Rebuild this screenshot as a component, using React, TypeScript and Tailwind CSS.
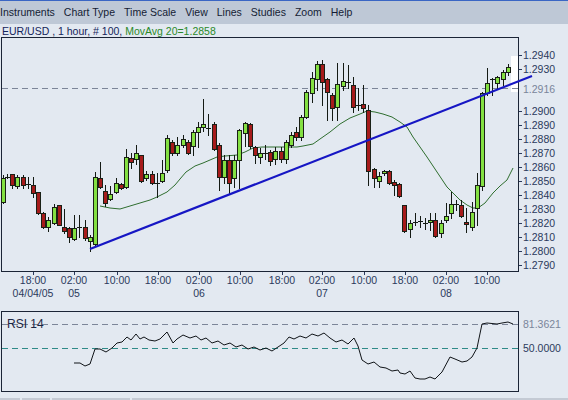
import React from 'react';

type Candle = [kind: 'g' | 'r' | 'd', top: number, bottom: number, high: number, low: number];

// pixel rows read off the plot (page coordinates), one entry per hourly bar
const CANDLES: Candle[] = [
  ['g', 178, 202, 175, 203], ['d', 177, 177, 174, 178], ['r', 174, 185, 174, 188], ['g', 177, 186, 175, 188],
  ['r', 177, 185, 175, 188], ['d', 184, 184, 177, 188], ['r', 185, 193, 177, 197], ['r', 192, 213, 192, 214],
  ['r', 213, 227, 212, 228], ['g', 220, 227, 217, 231], ['g', 207, 223, 204, 224], ['r', 205, 225, 205, 225],
  ['r', 227, 231, 209, 233], ['r', 228, 237, 227, 242], ['g', 228, 239, 215, 240], ['d', 227, 227, 215, 237],
  ['r', 227, 238, 220, 240], ['g', 237, 241, 235, 251], ['g', 177, 244, 172, 245], ['r', 178, 187, 162, 188],
  ['r', 191, 203, 185, 206], ['g', 194, 199, 186, 200], ['g', 183, 192, 178, 193], ['r', 184, 188, 183, 189],
  ['g', 157, 187, 149, 188], ['r', 158, 162, 153, 168], ['g', 153, 159, 145, 164], ['r', 155, 181, 155, 182],
  ['g', 174, 178, 171, 180], ['r', 174, 183, 171, 184], ['d', 183, 183, 173, 197], ['g', 173, 181, 160, 182],
  ['g', 138, 170, 135, 172], ['r', 142, 153, 140, 155], ['g', 145, 153, 137, 155], ['g', 139, 145, 135, 147],
  ['r', 142, 153, 140, 154], ['g', 132, 146, 130, 155], ['g', 127, 132, 122, 147], ['g', 124, 127, 99, 131],
  ['d', 128, 128, 114, 135], ['r', 124, 149, 122, 150], ['r', 145, 177, 143, 190], ['g', 160, 177, 155, 183],
  ['r', 160, 183, 155, 193], ['g', 160, 178, 155, 187], ['g', 130, 160, 129, 188], ['g', 123, 133, 122, 146],
  ['r', 124, 146, 123, 148], ['r', 147, 155, 146, 163], ['g', 153, 157, 148, 163], ['d', 153, 153, 145, 159],
  ['r', 152, 161, 150, 165], ['g', 151, 159, 147, 164], ['r', 151, 159, 147, 162], ['g', 142, 159, 140, 163],
  ['g', 135, 145, 132, 147], ['r', 132, 137, 127, 140], ['g', 117, 137, 115, 140], ['g', 92, 117, 90, 118],
  ['g', 78, 93, 72, 102], ['g', 64, 79, 61, 90], ['r', 64, 82, 60, 105], ['r', 79, 92, 78, 120],
  ['r', 95, 108, 93, 120], ['g', 84, 107, 63, 120], ['g', 81, 86, 63, 90], ['d', 82, 82, 65, 88],
  ['r', 85, 107, 77, 112], ['d', 105, 105, 88, 110], ['r', 104, 108, 85, 112], ['r', 110, 171, 105, 185],
  ['r', 169, 178, 168, 187], ['g', 176, 181, 172, 187], ['g', 171, 173, 170, 175], ['r', 171, 183, 170, 184],
  ['r', 182, 185, 180, 195], ['r', 184, 196, 183, 197], ['r', 205, 231, 205, 232], ['g', 223, 229, 220, 237],
  ['d', 222, 222, 213, 225], ['d', 221, 221, 216, 227], ['d', 223, 223, 218, 229], ['g', 220, 222, 213, 230],
  ['r', 220, 236, 213, 237], ['g', 223, 233, 220, 237], ['g', 216, 220, 203, 222], ['g', 204, 213, 192, 218],
  ['d', 204, 204, 200, 210], ['r', 205, 216, 200, 217], ['r', 222, 224, 208, 232], ['g', 212, 227, 202, 230],
  ['g', 185, 208, 173, 225], ['g', 93, 186, 92, 190], ['g', 83, 93, 68, 95], ['d', 79, 79, 78, 95],
  ['g', 77, 83, 76, 88], ['g', 72, 79, 70, 85], ['g', 67, 72, 64, 75],
];

const MA: [number, number][] = [
  [100, 206], [110, 208], [120, 209], [130, 206], [140, 203], [150, 200], [157, 197], [167, 192], [175, 185],
  [180, 179], [186, 172], [195, 166], [203, 163], [210, 160], [217, 157], [225, 156], [237, 155], [245, 152],
  [253, 148], [262, 147], [270, 147], [287, 147], [297, 147], [303, 146], [313, 144], [320, 139], [330, 132],
  [340, 124], [350, 118], [360, 114], [367, 111], [375, 112], [383, 114], [392, 117], [400, 122], [407, 127],
  [413, 137], [420, 147], [427, 157], [437, 172], [447, 187], [455, 195], [460, 200], [467, 205], [473, 208],
  [478, 208], [485, 203], [493, 193], [500, 186], [507, 180], [513, 168],
];

const RSI: [number, number][] = [
  [74, 363], [80, 363], [85, 366], [90, 364], [95, 349], [100, 349], [106, 352], [112, 348], [117, 343],
  [122, 342], [127, 337], [131, 340], [136, 334], [140, 339], [144, 337], [149, 340], [155, 341], [160, 339],
  [167, 332], [173, 343], [177, 339], [183, 335], [190, 338], [196, 336], [201, 340], [206, 338], [212, 343],
  [218, 341], [224, 345], [230, 343], [236, 347], [242, 345], [248, 349], [254, 347], [260, 350], [266, 348],
  [272, 351], [278, 347], [284, 343], [289, 337], [294, 339], [300, 336], [306, 338], [312, 334], [318, 336],
  [324, 333], [330, 338], [336, 342], [342, 340], [348, 344], [354, 338], [358, 346], [362, 360], [368, 364],
  [374, 362], [380, 367], [386, 368], [392, 371], [398, 370], [400, 373], [405, 374], [410, 371], [415, 378],
  [420, 379], [425, 379], [430, 377], [435, 379], [442, 372], [450, 357], [455, 359], [462, 362], [467, 361],
  [472, 357], [477, 348], [482, 324], [487, 323], [497, 324], [502, 323], [508, 322], [513, 324],
];

const PRICES = ['1.2940', '1.2930', '1.2900', '1.2890', '1.2880', '1.2870', '1.2860', '1.2850', '1.2840', '1.2830', '1.2820', '1.2810', '1.2800', '1.2790'];

const TIMES = [
  { x: 33, t: '18:00', d: '04/04/05' },
  { x: 74, t: '02:00', d: '05' },
  { x: 117, t: '10:00' },
  { x: 158, t: '18:00' },
  { x: 199, t: '02:00', d: '06' },
  { x: 240, t: '10:00' },
  { x: 282, t: '18:00' },
  { x: 322, t: '02:00', d: '07' },
  { x: 364, t: '10:00' },
  { x: 405, t: '18:00' },
  { x: 446, t: '02:00', d: '08' },
  { x: 487, t: '10:00' },
];

const MENU = ['Instruments', 'Chart Type', 'Time Scale', 'View', 'Lines', 'Studies', 'Zoom', 'Help'];

const priceY = (p: string) => 55 + (1.294 - parseFloat(p)) * 14000;
const pts = (list: [number, number][]) => list.map(([x, y]) => `${x},${y}`).join(' ');

function Candles() {
  return (
    <g>
      {CANDLES.map(([kind, top, bottom, high, low], i) => {
        const cx = i === 0 ? 3 : Math.round(2 + 5.16 * i);
        return (
          <g key={i}>
            <line x1={cx + 0.5} y1={high} x2={cx + 0.5} y2={low + 1} stroke="#141a14" strokeWidth={1} />
            {kind === 'd' ? (
              <line x1={cx - 2} y1={top + 0.5} x2={cx + 3} y2={top + 0.5} stroke="#141a14" strokeWidth={1} />
            ) : (
              <rect
                x={cx - 1.5}
                y={top + 0.5}
                width={4}
                height={Math.max(bottom - top, 2)}
                fill={kind === 'g' ? '#84e042' : '#a61b1b'}
                stroke="#1a2016"
                strokeWidth={1}
              />
            )}
          </g>
        );
      })}
    </g>
  );
}

export default function App() {
  return (
    <div className="relative h-[400px] w-[568px] overflow-hidden bg-[#e3e9f1] font-['Liberation_Sans',Arial,sans-serif] text-[#2b3a5c]">
      <div className="flex h-[24px] items-center gap-[9px] border-t border-[#3a66c4] bg-[#bec8d6] text-[10.5px] text-[#141c34]">
        {MENU.map((m) => (
          <span key={m}>{m}</span>
        ))}
      </div>

      <div className="h-[13px] pl-[2px] text-[10.5px] leading-[15px] text-[#14245a]">
        EUR/USD , 1 hour, # 100, <span className="text-[#2a8a2a]">MovAvg 20=1.2858</span>
      </div>

      {/* price chart */}
      <div className="flex">
        <div className="relative ml-[1px] h-[235px] w-[518px] border border-[#1b2436]">
          <svg className="absolute left-0 top-0 overflow-visible" width={516} height={233} viewBox="2 38 516 233">
            <rect x={511} y={56} width={7} height={36} fill="#ffffff" />
            <line x1={2} y1={88.5} x2={518} y2={88.5} stroke="#7c8598" strokeWidth={1} strokeDasharray="6 4" />
            <polyline points={pts(MA)} fill="none" stroke="#2f6e2f" strokeWidth={1} />
            <Candles />
            <line x1={90} y1={249} x2={532} y2={76} stroke="#1616c4" strokeWidth={2.2} />
          </svg>
        </div>
        <div className="relative flex-1 text-[10.5px] leading-[12px]">
          {PRICES.map((p) => (
            <div key={p} className="absolute left-0 flex items-center" style={{ top: priceY(p) - 37 - 6 }}>
              <span className="h-px w-[3px] bg-[#2b3a5c]" />
              <span className="ml-[1px]">{p}</span>
            </div>
          ))}
          <div className="absolute left-[4px] text-[#7a859a]" style={{ top: priceY('1.2916') - 37 - 6 }}>
            1.2916
          </div>
        </div>
      </div>

      {/* time scale */}
      <div className="relative h-[39px] w-[520px] text-[10.5px] leading-[12px]">
        {TIMES.map((tm) => (
          <React.Fragment key={tm.x}>
            <span className="absolute top-0 h-[3px] w-px bg-[#2b3a5c]" style={{ left: tm.x }} />
            <span className="absolute top-[2px] -translate-x-1/2" style={{ left: tm.x }}>
              {tm.t}
            </span>
            {tm.d ? (
              <span className="absolute top-[15px] -translate-x-1/2" style={{ left: tm.x }}>
                {tm.d}
              </span>
            ) : null}
          </React.Fragment>
        ))}
      </div>

      {/* RSI study */}
      <div className="flex">
        <div className="relative ml-[1px] h-[81px] w-[518px] border border-[#1b2436]">
          <svg className="absolute left-0 top-0 overflow-visible" width={516} height={79} viewBox="2 312 516 79">
            <line x1={2} y1={324.5} x2={521} y2={324.5} stroke="#7c8598" strokeWidth={1} strokeDasharray="6 4" />
            <line x1={2} y1={348.5} x2={521} y2={348.5} stroke="#2f8a88" strokeWidth={1} strokeDasharray="6 4" />
            <polyline points={pts(RSI)} fill="none" stroke="#101418" strokeWidth={1} />
          </svg>
          <span className="absolute left-[5px] top-[5px] text-[12px] leading-[14px] text-[#1b2642]">RSI 14</span>
        </div>
        <div className="relative flex-1 text-[10.5px] leading-[12px]">
          <span className="absolute left-[4px] top-[7px] text-[#7a859a]">81.3621</span>
          <span className="absolute left-[4px] top-[31px]">50.0000</span>
        </div>
      </div>

      <div className="mt-[6px] flex h-[3px] gap-[2px]">
        <div className="w-[20px] bg-[#c4cad4]" />
        <div className="w-[28px] bg-[#c4cad4]" />
        <div className="w-[78px] bg-[#c4cad4]" />
        <div className="flex-1 bg-[#c4cad4]" />
      </div>
    </div>
  );
}
